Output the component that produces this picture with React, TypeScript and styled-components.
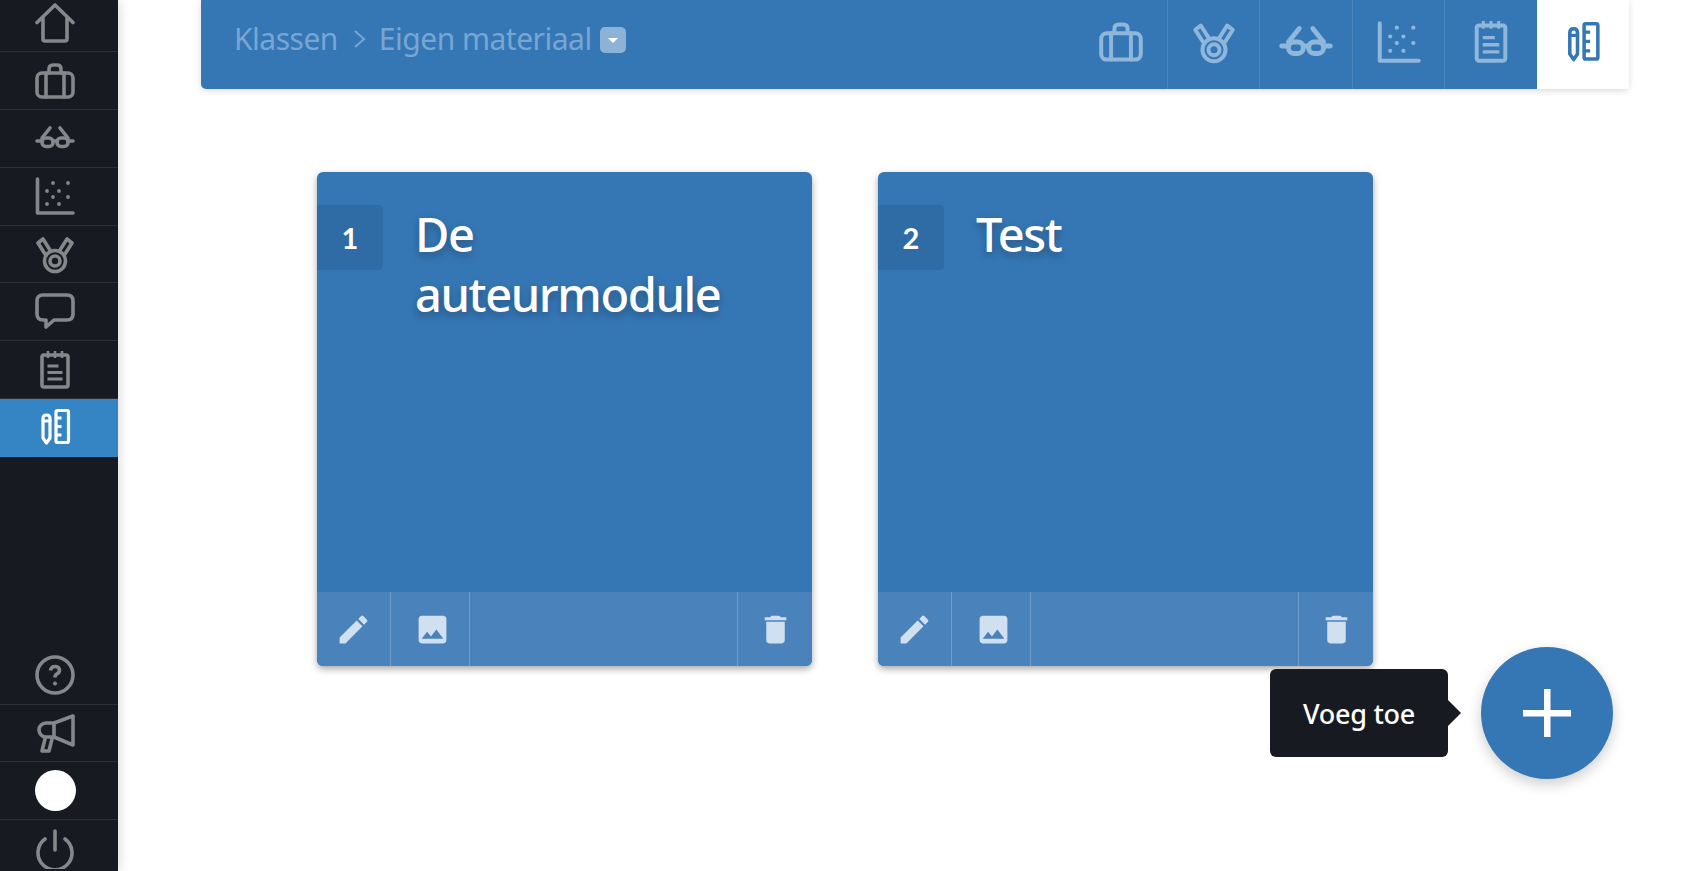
import styled, { createGlobalStyle } from 'styled-components';
import { MdEdit, MdImage, MdDelete } from 'react-icons/md';

const GlobalStyle = createGlobalStyle`
  html, body {
    margin: 0;
    height: 100%;
    overflow: hidden;
    background: #ffffff;
    font-family: 'Noto Sans', 'Liberation Sans', sans-serif;
  }
`;

const Page = styled.div`
  display: flex;
  height: 871px;
  overflow: hidden;
  position: relative;
`;

const Sidebar = styled.nav`
  width: 118px;
  height: 871px;
  flex: none;
  background: #171b21;
  box-shadow: 0 0 12px rgba(0, 0, 0, 0.18);
  display: flex;
  flex-direction: column;
  justify-content: space-between;
  overflow: hidden;
`;

const SideGroup = styled.div<{ $offset: string }>`
  margin: ${(p) => p.$offset};
`;

const SideRow = styled.div<{ $active?: boolean }>`
  height: 57.8px;
  box-sizing: border-box;
  padding-right: 8px;
  display: flex;
  align-items: center;
  justify-content: center;
  background: ${(p) => (p.$active ? '#3585c5' : 'transparent')};
  color: ${(p) => (p.$active ? '#ffffff' : '#85878a')};
  border-bottom: 1px solid ${(p) => (p.$active ? 'transparent' : '#2b2f35')};
`;

const Avatar = styled.div`
  width: 41px;
  height: 41px;
  border-radius: 50%;
  background: #ffffff;
`;

const Main = styled.main`
  flex: 1;
  padding-left: 83px;
  min-width: 0;
`;

const Header = styled.header`
  width: 1428px;
  height: 89px;
  display: flex;
  justify-content: space-between;
  background: #3577b5;
  border-radius: 0 0 5px 5px;
  box-shadow: 0 2px 6px rgba(0, 0, 0, 0.14);
`;

const Crumbs = styled.div`
  display: flex;
  align-items: center;
  padding-left: 33px;
  font-size: 30px;
  letter-spacing: -0.5px;
  color: #78a6d3;
  height: 77px;
`;

const CrumbSep = styled.svg`
  margin: 0 12px 0 15px;
`;

const DropButton = styled.span`
  width: 26px;
  height: 26px;
  margin: 3px 0 0 8px;
  border-radius: 5px;
  background: #8cb2d8;
  display: flex;
  align-items: center;
  justify-content: center;
  &::after {
    content: '';
    border-left: 5px solid transparent;
    border-right: 5px solid transparent;
    border-top: 5px solid #ffffff;
  }
`;

const Tabs = styled.div`
  display: flex;
`;

const Tab = styled.div<{ $active?: boolean }>`
  width: 92.4px;
  height: 89px;
  box-sizing: border-box;
  display: flex;
  align-items: center;
  justify-content: center;
  padding-bottom: 5px;
  color: ${(p) => (p.$active ? '#3577b5' : '#8fb7db')};
  background: ${(p) => (p.$active ? '#ffffff' : 'transparent')};
  border-left: 1px solid ${(p) => (p.$active ? 'transparent' : '#4a85bd')};
  &:first-child {
    border-left: 0;
  }
`;

const Cards = styled.section`
  display: flex;
  gap: 66px;
  padding: 83px 0 0 116px;
`;

const Card = styled.article`
  width: 495px;
  height: 494px;
  display: flex;
  flex-direction: column;
  background: #3577b5;
  border-radius: 6px;
  overflow: hidden;
  box-shadow: 0 3px 7px rgba(0, 0, 0, 0.35);
`;

const CardBody = styled.div`
  flex: 1;
  display: flex;
  align-items: flex-start;
  padding-top: 33px;
`;

const Badge = styled.div`
  width: 66px;
  height: 65px;
  flex: none;
  display: flex;
  align-items: center;
  justify-content: center;
  background: #2f6ca5;
  border-radius: 0 4px 4px 0;
  color: #ffffff;
  font-family: 'Lato', sans-serif;
  font-size: 29px;
  font-weight: 700;
`;

const CardTitle = styled.h2`
  margin: -1px 60px 0 32px;
  font-size: 47px;
  line-height: 60px;
  letter-spacing: -1.4px;
  font-weight: 500;
  color: #ffffff;
  text-shadow: 0 4px 8px rgba(0, 0, 0, 0.3);
`;

const CardFooter = styled.footer`
  height: 74px;
  flex: none;
  display: flex;
  background: #4a83bc;
  color: #d0e0f0;
`;

const FooterButton = styled.div<{ $width: number; $shift?: number }>`
  width: ${(p) => p.$width}px;
  box-sizing: border-box;
  display: flex;
  align-items: center;
  justify-content: center;
  padding-left: ${(p) => p.$shift ?? 0}px;
  border-right: 1px solid #6f9ccb;
  &:last-child {
    border-right: 0;
    border-left: 1px solid #6f9ccb;
    margin-left: auto;
  }
`;

const Tooltip = styled.div`
  position: absolute;
  left: 1270px;
  top: 669px;
  width: 178px;
  height: 88px;
  display: flex;
  align-items: center;
  justify-content: center;
  background: #171b21;
  border-radius: 6px;
  color: #ffffff;
  font-size: 27px;
  font-weight: 500;
  letter-spacing: -0.3px;
  &::after {
    content: '';
    position: absolute;
    right: -13px;
    top: 31px;
    border-left: 13px solid #171b21;
    border-top: 13px solid transparent;
    border-bottom: 13px solid transparent;
  }
`;

const AddButton = styled.div`
  position: absolute;
  left: 1481px;
  top: 647px;
  width: 132px;
  height: 132px;
  border-radius: 50%;
  background: #3577b5;
  color: #ffffff;
  display: flex;
  align-items: center;
  justify-content: center;
  box-shadow: 0 5px 14px rgba(0, 0, 0, 0.2);
`;

type IconProps = { size?: number };

const Stroke = ({ size = 40, children }: IconProps & { children: React.ReactNode }) => (
  <svg
    width={size}
    height={size}
    viewBox="0 0 40 40"
    fill="none"
    stroke="currentColor"
    strokeWidth="3.6"
    strokeLinecap="round"
    strokeLinejoin="round"
  >
    {children}
  </svg>
);

const HomeIcon = (p: IconProps) => (
  <Stroke {...p}>
    <path d="M2 19.500 20 2l18 17.500M8 13.500v22.500q0 2 2 2h20q2 0 2-2V13.500" />
  </Stroke>
);

const CaseIcon = (p: IconProps) => (
  <Stroke {...p}>
    <rect x="2" y="12" width="36" height="24" rx="5" />
    <path d="M11 12v24M29 12v24M14 12V8q0-4 4-4h4q4 0 4 4v4" />
  </Stroke>
);

const GlassesIcon = (p: IconProps) => (
  <Stroke {...p}>
    <rect x="7" y="20" width="11" height="8.500" rx="4" />
    <rect x="22" y="20" width="11" height="8.500" rx="4" />
    <path d="M2 23h5M18 23h4M33 23h5M7 20l8-10M33 20l-8-10" />
  </Stroke>
);

const ChartIcon = (p: IconProps) => (
  <Stroke {...p}>
    <path d="M2.500 3v34H38" />
    <g fill="currentColor" stroke="none">
      <circle cx="18" cy="7" r="1.900" />
      <circle cx="33" cy="7" r="1.900" />
      <circle cx="12" cy="15" r="1.900" />
      <circle cx="24" cy="15" r="1.900" />
      <circle cx="18" cy="21" r="1.900" />
      <circle cx="33" cy="21" r="1.900" />
      <circle cx="12" cy="28" r="1.900" />
      <circle cx="24" cy="28" r="1.900" />
    </g>
  </Stroke>
);

const MedalIcon = (p: IconProps) => (
  <Stroke {...p}>
    <circle cx="20" cy="27" r="10.500" />
    <circle cx="20" cy="27" r="5" />
    <path d="M10 20 3 9l5-4 7 11M30 20l7-11-5-4-7 11" />
  </Stroke>
);

const ChatIcon = (p: IconProps) => (
  <Stroke {...p}>
    <path d="M8 3h24q6 0 6 6v13q0 6-6 6H19l-8 7v-7H8q-6 0-6-6V9q0-6 6-6Z" />
  </Stroke>
);

const NoteIcon = (p: IconProps) => (
  <Stroke {...p}>
    <rect x="7" y="5" width="26" height="32" rx="2" />
    <path d="M13 1v7M20 1v7M27 1v7" strokeWidth="2.600" strokeLinecap="butt" />
    <path d="M12.500 16h11M12.500 22.500h15M12.500 29h15" strokeWidth="3" strokeLinecap="butt" />
  </Stroke>
);

const PencilRulerIcon = (p: IconProps) => (
  <Stroke {...p}>
    <path d="M8 11.500q0-3.500 3.500-3.500t3.500 3.500V31l-3.500 5L8 31Z" strokeWidth="3.200" />
    <path d="M8 14h7" strokeWidth="3" />
    <rect x="21" y="3.500" width="12.500" height="32" rx="1.500" strokeWidth="3.200" />
    <path d="M21 11h5.500M21 19.500h5.500M21 28h5.500" strokeWidth="3" strokeLinecap="butt" />
  </Stroke>
);

const HelpIcon = (p: IconProps) => (
  <Stroke {...p}>
    <circle cx="20" cy="20" r="18" />
    <path d="M15.500 15.500q.5-4 4.500-4t4.500 3.500q0 2.500-2.500 3.800-2 1-2 3.700" strokeLinecap="butt" />
    <circle cx="20" cy="28.500" r="1.600" fill="currentColor" strokeWidth="1" />
  </Stroke>
);

const MegaphoneIcon = (p: IconProps) => (
  <Stroke {...p}>
    <path d="M19 10 38 3v29l-19-8ZM19 10h-8a7 7 0 0 0 0 14h8" />
    <path d="M10 26 7 38h7l3-12" />
  </Stroke>
);

const PowerIcon = (p: IconProps) => (
  <Stroke {...p}>
    <path d="M20 2v19M10 10a17 17 0 1 0 20 0" />
  </Stroke>
);

const PlusIcon = () => (
  <svg width="48" height="48" viewBox="0 0 48 48" fill="currentColor">
    <path d="M21 0h6.500v21H48v6.500H27.500V48H21V27.500H0V21h21Z" />
  </svg>
);

const cards = [
  { id: 1, title: 'De auteurmodule' },
  { id: 2, title: 'Test' },
];

export default function App() {
  return (
    <Page>
      <GlobalStyle />
      <Sidebar>
        <SideGroup $offset="-5.500px 0 0">
          <SideRow><HomeIcon /></SideRow>
          <SideRow><CaseIcon /></SideRow>
          <SideRow><GlassesIcon /></SideRow>
          <SideRow><ChartIcon /></SideRow>
          <SideRow><MedalIcon /></SideRow>
          <SideRow><ChatIcon /></SideRow>
          <SideRow><NoteIcon /></SideRow>
          <SideRow $active><PencilRulerIcon /></SideRow>
        </SideGroup>
        <SideGroup $offset="0 0 -7px">
          <SideRow><HelpIcon /></SideRow>
          <SideRow><MegaphoneIcon /></SideRow>
          <SideRow><Avatar /></SideRow>
          <SideRow><PowerIcon /></SideRow>
        </SideGroup>
      </Sidebar>
      <Main>
        <Header>
          <Crumbs>
            <span>Klassen</span>
            <CrumbSep width="14" height="20" viewBox="0 0 14 20" fill="none" stroke="currentColor" strokeWidth="2">
              <path d="m2 2 9 8-9 8" />
            </CrumbSep>
            <span>Eigen materiaal</span>
            <DropButton />
          </Crumbs>
          <Tabs>
            <Tab><CaseIcon size={44} /></Tab>
            <Tab><MedalIcon size={44} /></Tab>
            <Tab><GlassesIcon size={54} /></Tab>
            <Tab><ChartIcon size={44} /></Tab>
            <Tab><NoteIcon size={44} /></Tab>
            <Tab $active><PencilRulerIcon size={44} /></Tab>
          </Tabs>
        </Header>
        <Cards>
          {cards.map((card) => (
            <Card key={card.id}>
              <CardBody>
                <Badge>{card.id}</Badge>
                <CardTitle>{card.title}</CardTitle>
              </CardBody>
              <CardFooter>
                <FooterButton $width={74}><MdEdit size={37} /></FooterButton>
                <FooterButton $width={79} $shift={4}><MdImage size={37} /></FooterButton>
                <FooterButton $width={75}><MdDelete size={37} /></FooterButton>
              </CardFooter>
            </Card>
          ))}
        </Cards>
      </Main>
      <Tooltip>Voeg toe</Tooltip>
      <AddButton><PlusIcon /></AddButton>
    </Page>
  );
}
